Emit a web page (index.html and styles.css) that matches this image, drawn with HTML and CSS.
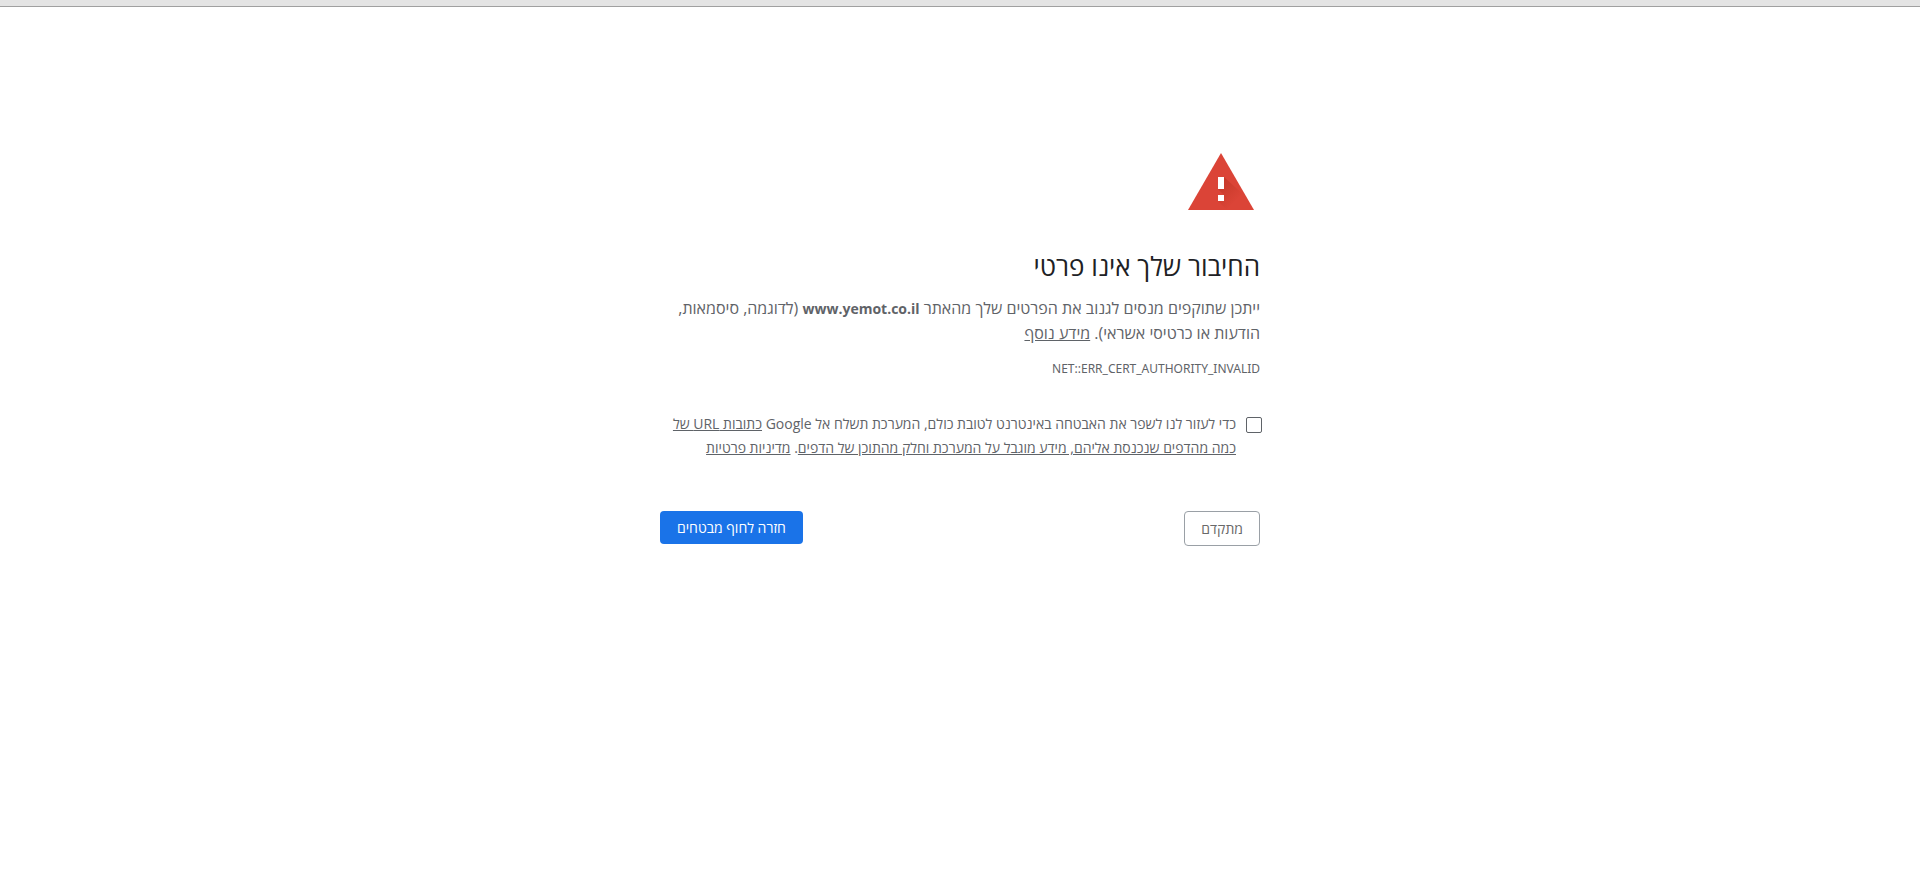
FILE: index.html
```html
<!DOCTYPE html>
<html lang="he" dir="rtl">
<head>
<meta charset="utf-8">
<title>שגיאת פרטיות</title>
<link rel="stylesheet" href="styles.css">
</head>
<body>
<header class="toolbar-edge"></header>
<main class="interstitial">
  <svg class="warning-icon" viewBox="0 0 72 72" aria-hidden="true">
    <defs>
      <linearGradient id="shade" gradientUnits="userSpaceOnUse" x1="35" y1="34" x2="53" y2="52">
        <stop offset="0" stop-color="#a52714" stop-opacity=".4"/>
        <stop offset="1" stop-color="#a52714" stop-opacity="0"/>
      </linearGradient>
    </defs>
    <path fill="#db4437" d="M3 63h66L36 6z"/>
    <path fill="url(#shade)" d="M39 30l22 20 8 13H42l-9-9 6-6-6-6z"/>
    <path fill="#fff" d="M33 30h6v12h-6zM33 48h6v6h-6z"/>
  </svg>
  <h1 class="title">החיבור שלך אינו פרטי</h1>
  <p class="message">ייתכן שתוקפים מנסים לגנוב את הפרטים שלך מהאתר <strong class="host">www.yemot.co.il</strong> (לדוגמה, סיסמאות, הודעות או כרטיסי אשראי). <a class="link" href="#">מידע נוסף</a></p>
  <p class="error-code" dir="ltr">NET::ERR_CERT_AUTHORITY_INVALID</p>
  <div class="opt-in">
    <input class="checkbox" type="checkbox" id="opt-in">
    <label class="opt-in-text" for="opt-in">כדי לעזור לנו לשפר את האבטחה באינטרנט לטובת כולם, המערכת תשלח אל Google <a class="link" href="#">כתובות URL של כמה מהדפים שנכנסת אליהם, מידע מוגבל על המערכת וחלק מהתוכן של הדפים</a>. <a class="link" href="#">מדיניות פרטיות</a></label>
  </div>
  <div class="actions">
    <button class="button secondary" type="button">מתקדם</button>
    <button class="button primary" type="button">חזרה לחוף מבטחים</button>
  </div>
</main>
</body>
</html>
```
FILE: styles.css
```css
* { box-sizing: border-box; }
body {
  margin: 0;
  background: #fff;
  color: #5f6368;
  font-family: "Open Sans", "Noto Sans", "DejaVu Sans", sans-serif;
  font-size: 16px;
  line-height: 24px;
}
.toolbar-edge { height: 7px; background: #e4e4e4; border-bottom: 1px solid #a0a0a0; }
.interstitial { max-width: 600px; margin: 0 auto; padding-top: 140px; }
.warning-icon { display: block; width: 72px; height: 72px; margin: 0 3px 31px; }
.title { margin: 0 0 14px; color: #202124; font-size: 26px; font-weight: 400; line-height: 32px; }
.message { margin: 0; }
.host { font-size: 14px; font-weight: 700; }
.link { color: inherit; text-decoration: underline; }
.error-code { margin: 12px 0 0; font-family: "Noto Sans", "Open Sans", sans-serif; font-size: 12px; text-align: right; }
.opt-in { display: flex; gap: 10px; margin-top: 31px; font-size: 14px; }
.checkbox { flex: none; appearance: none; width: 16px; height: 16px; margin: 5px -2px 0 0; border: 1px solid #5f6368; border-radius: 2px; background: #fff; }
.opt-in-text { flex: 1; }
.actions { display: flex; justify-content: space-between; align-items: flex-start; margin-top: 51px; }
.button { padding: 8px 16px; border: 0; border-radius: 4px; font: 14px/17px "Open Sans", "DejaVu Sans", sans-serif; }
.primary { padding: 8px 17px; background: #1a73e8; color: #fff; }
.secondary { background: #fff; color: #696969; border: 1px solid #9aa0a6; }
```
